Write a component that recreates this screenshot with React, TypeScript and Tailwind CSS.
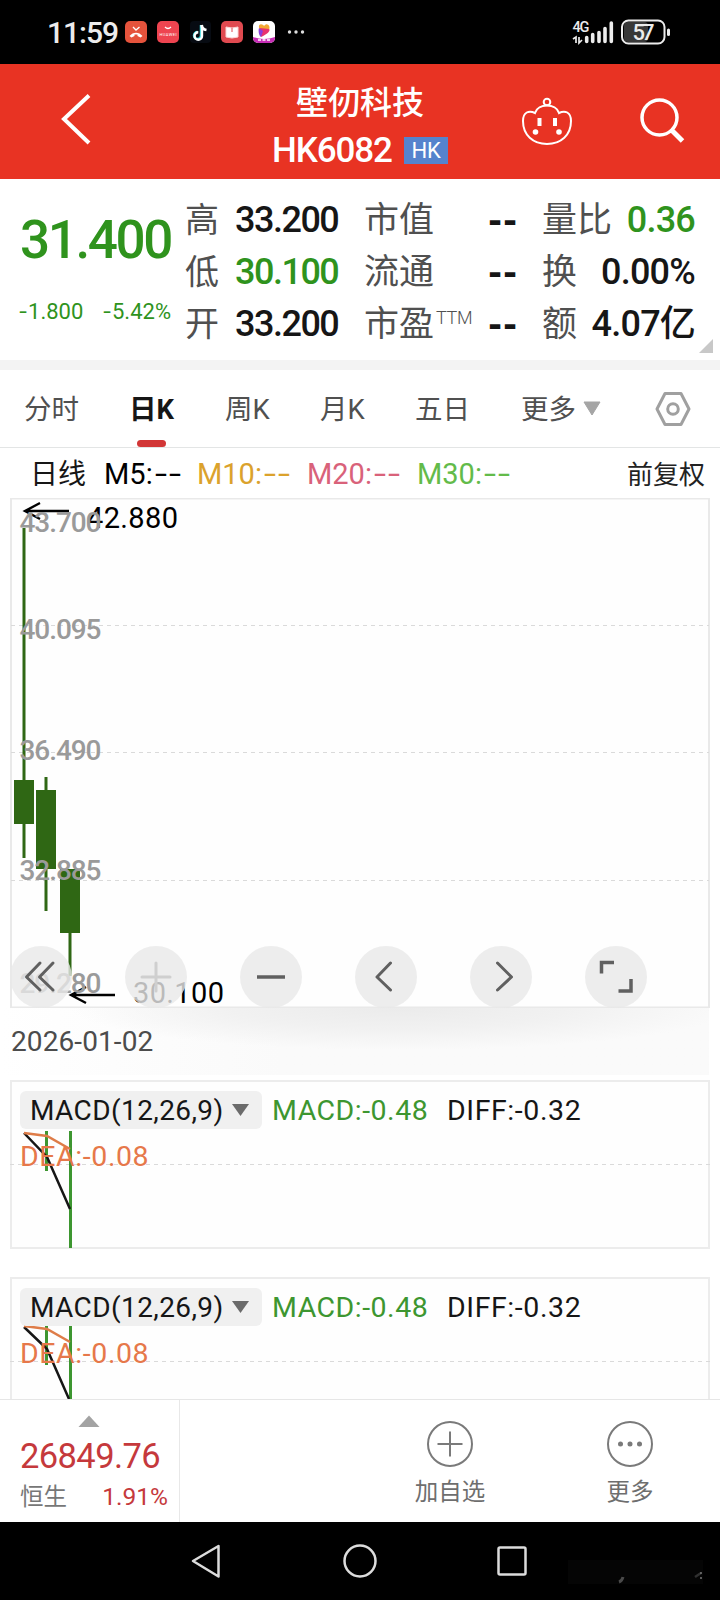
import { Fragment } from "react";
import clsx from "clsx";

interface Candle {
    x: number;
    top: number;
    bottom: number;
    open: number;
    close: number;
}

// Coordinates are relative to the top left corner of the price chart
const CANDLES: Candle[] = [
    { x: 24, top: 30, bottom: 360, open: 282, close: 326 },
    { x: 46, top: 279, bottom: 413, open: 292, close: 371 },
    { x: 70, top: 371, bottom: 478, open: 371, close: 435 },
];

const PRICE_LABELS = [
    { text: "43.700", y: 33.5 },
    { text: "40.095", y: 141 },
    { text: "36.490", y: 262 },
    { text: "32.885", y: 381.5 },
    { text: "29.280", y: 494.5 },
];

const QUOTES = [
    { a: "高", av: "33.200", b: "市值", c: "量比", cv: "0.36", aGreen: false, cGreen: true },
    { a: "低", av: "30.100", b: "流通", c: "换", cv: "0.00%", aGreen: true, cGreen: false },
    { a: "开", av: "33.200", b: "市盈", c: "额", cv: "4.07亿", aGreen: false, cGreen: false },
];

const MA_LEGEND = [
    { text: "M5", className: "w-[93px] text-black" },
    { text: "M10", className: "w-[110px] text-[#dba22c]" },
    { text: "M20", className: "w-[110px] text-[#d9627a]" },
    { text: "M30", className: "w-[110px] text-[#63bb4a]" },
];

const StatusBar = () => (
    <div className="flex h-16 items-center bg-black pl-[47px] text-[#ececec]">
        <span className="w-[78px] pt-[2px] text-[30px] leading-none font-medium tracking-[-1px]">11:59</span>
        <svg width="182" height="24" viewBox="0 0 182 24">
            <rect x="0" y="1" width="22" height="22" rx="5" fill="#e5533c" />
            <path d="M4.500 16c3.500-4.500 9.500-4.500 13 0l-2 1.500-3-1.500v-1.500h-3v1.500l-3 1.500z" fill="#fff" />
            <path d="M8 7l3 3 3.500-3" fill="none" stroke="#fff" strokeWidth="1.300" />
            <rect x="32" y="1" width="22" height="22" rx="5" fill="#ee4450" />
            <path d="M40 7q3 3 6 0" fill="none" stroke="#fff" strokeWidth="1.200" />
            <text x="34.500" y="15.500" fontSize="4" fill="#fff" textLength="17">HUAWEI</text>
            <rect x="65" y="1" width="21" height="22" rx="4" fill="#070b12" />
            <path d="M76 5v10.500a3.500 3.500 0 1 1-3.500-3.500" fill="none" stroke="#35d6dd" strokeWidth="2.500" />
            <path d="M76.500 5c.3 3 2 4.500 5 5" fill="none" stroke="#fff" strokeWidth="2.600" />
            <path d="M77 5v11a3.700 3.700 0 1 1-3.700-3.700" fill="none" stroke="#fff" strokeWidth="2.400" />
            <rect x="96" y="1" width="22" height="22" rx="5" fill="#e04a50" />
            <path d="M101 7l6 1 6-1v10l-6 1-6-1z" fill="#fff" stroke="#fbd5d5" />
            <path d="M107 8v4" stroke="#e04a50" />
            <rect x="128" y="1" width="22" height="22" rx="5" fill="#fff" />
            <path d="M134 8c-1-5 4-4 5-2 3-4 7 0 5 4l-9 1z" fill="#f4a834" />
            <path d="M135 8l9 1c2 2-2 5-8 8z" fill="#e8336f" />
            <path d="M134 8l4 3-2 6c-2-1-3-6-2-9z" fill="#8a3ddc" />
            <path d="M128 17q11 4 22 0v1a5 5 0 0 1-5 5h-12a5 5 0 0 1-5-5z" fill="#c72db6" />
            <path d="M133 20h12" stroke="#fff" strokeDasharray="3 1.500" strokeWidth="1.500" />
            <circle cx="164.500" cy="12" r="1.700" fill="#ddd" />
            <circle cx="171" cy="12" r="1.700" fill="#ddd" />
            <circle cx="177.500" cy="12" r="1.700" fill="#ddd" />
        </svg>
        <svg className="ml-auto mr-[46px]" width="102" height="28" viewBox="572 18 102 28">
            <text x="572.500" y="32" fontSize="14.500" fontWeight="500" fill="#ececec" textLength="17">4G</text>
            <path d="M573 39l3-2v6M579 37v6l3-3" fill="none" stroke="#ececec" strokeWidth="1.700" />
            <path d="M586.700 37.500v4M592.700 34.500v7M599 32.500v9M605 28.500v13M611.300 23v18.500" stroke="#ececec" strokeWidth="3.600" strokeLinecap="round" />
            <rect x="624" y="22" width="24" height="20" rx="4" fill="#383838" />
            <rect x="622" y="20.500" width="42.500" height="23" rx="6.500" fill="none" stroke="#ececec" strokeWidth="2" />
            <path d="M668.500 30v4.500" stroke="#ececec" strokeWidth="3" strokeLinecap="round" />
            <text x="632.500" y="40" fontSize="22" fontWeight="500" fill="#ececec" textLength="22">57</text>
        </svg>
    </div>
);

const Header = () => (
    <header className="flex h-[115px] items-center bg-[#e83323] text-white">
        <svg className="mb-[5px] ml-[60px]" width="32" height="54" viewBox="60 92 32 54">
            <path d="M89 95.500L64 119L89 143" fill="none" stroke="#fff" strokeWidth="4" />
        </svg>
        <div className="ml-[166px] flex w-[204px] flex-col items-center pt-[16px]">
            <h1 className="text-[32px] leading-10 font-medium">壁仞科技</h1>
            <div className="mt-[6px] flex w-[176px] items-center justify-between pb-1">
                <span className="text-[35px] leading-[44px] font-medium tracking-[-1.1px]">HK6082</span>
                <span className="flex h-[27px] w-11 items-center justify-center bg-[#5583cd] text-[22px] leading-none tracking-[-0.3px]">HK</span>
            </div>
        </div>
        <svg className="ml-[58px]" width="54" height="52" viewBox="520 96 54 52" fill="none" stroke="#fff" strokeWidth="2">
            <circle cx="547" cy="102" r="3.300" />
            <path d="M535 113C538 103 556 103 559 113C565 110 571 112 571 121C571 135 561 144 547 144S523 135 523 121C523 112 529 110 535 113Z" />
            <path d="M539.500 118v8M555 118v8" strokeWidth="4" />
            <circle cx="535.500" cy="132" r="2.800" fill="#fff" stroke="none" />
            <circle cx="559" cy="132" r="2.800" fill="#fff" stroke="none" />
        </svg>
        <svg className="mb-[3px] ml-[63px]" width="50" height="50" viewBox="637 95 50 50" fill="none" stroke="#fff">
            <circle cx="659.500" cy="117.500" r="17.500" strokeWidth="3.500" />
            <path d="M671.500 130l11 11" strokeWidth="5" />
        </svg>
    </header>
);

const QuotePanel = () => (
    <section className="relative flex h-[181px] bg-white">
        <div className="w-[185px] pl-5 text-[#2f931d]">
            <div className="mt-[30px] text-[53px] leading-[62px] font-medium tracking-[-2.4px]">31.400</div>
            <div className="mt-[28px] flex justify-between pr-[14px] text-[22px] leading-[26px]">
                <span className="flex"><span className="scale-x-125">-</span><span className="ml-0.5">1.800</span></span>
                <span className="flex"><span className="scale-x-125">-</span><span className="ml-0.5">5.42%</span></span>
            </div>
        </div>
        <div className="grid h-[156px] w-[510px] grid-cols-[46px_133px_118px_60px_auto] grid-rows-[52px_52px_52px] items-center pt-[15px] text-[36px] leading-[52px]">
            {QUOTES.map((q, i) => (
                <Fragment key={i}>
                    <span className="text-[34px] text-[#505050]">{q.a}</span>
                    <span className={clsx("pl-1 font-medium tracking-[-1.5px]", q.aGreen ? "text-[#2f931d]" : "text-[#161616]")}>{q.av}</span>
                    <span className="flex pt-0.5 text-[35px] text-[#505050]">
                        {q.b}
                        {i === 2 && <span className="mt-[-7px] ml-0.5 text-[18px] leading-[52px] font-light tracking-[-0.3px]">TTM</span>}
                    </span>
                    <span className="pl-1.5 font-['DejaVu_Sans'] text-[34px] font-bold tracking-[0.8px] text-[#161616]">--</span>
                    <span className="flex items-center justify-between">
                        <span className="pt-0.5 text-[35px] text-[#505050]">{q.c}</span>
                        <span className={clsx("font-medium tracking-[-0.8px]", q.cGreen ? "text-[#2f931d]" : "text-[#161616]")}>{q.cv}</span>
                    </span>
                </Fragment>
            ))}
        </div>
        <svg className="absolute right-[7px] bottom-[7px]" width="14" height="14">
            <path d="M14 0v14H0z" fill="#c8c8c8" />
        </svg>
    </section>
);

const PeriodTabs = () => (
    <nav className="flex h-[78px] items-center border-b border-[#e3e5e5] pl-[24px] text-[27.500px] leading-none text-[#505050]">
        <span className="w-[105px] pt-[3px]">分时</span>
        <span className="relative w-[96px] pt-[3px] font-bold text-[#161616]">
            日K
            <span className="absolute top-[47px] left-[8px] h-[7px] w-[29px] rounded-full bg-[#d23636]" />
        </span>
        <span className="w-[95px] pt-[3px]">周K</span>
        <span className="w-[95px] pt-[3px]">月K</span>
        <span className="w-[106px] pt-[3px]">五日</span>
        <span className="pt-[3px]">更多</span>
        <svg className="ml-[7px]" width="18" height="15">
            <path d="M1 1h16L9 14z" fill="#a5a5a5" stroke="#a5a5a5" strokeLinejoin="round" />
        </svg>
        <svg className="ml-[52px]" width="40" height="38" viewBox="0 0 40 38" fill="none" stroke="#a0a0a0" strokeWidth="3">
            <path d="M12 3.500h16l8 15.500-8 15.500H12L4 19z" strokeLinejoin="round" />
            <circle cx="20" cy="19" r="5.300" />
        </svg>
    </nav>
);

const PriceChart = () => (
    <svg className="block" width="720" height="510" viewBox="0 0 720 510">
        <rect x="11" y="0.500" width="698" height="509" fill="#fefefe" stroke="#e9e9e9" strokeWidth="2" />
        {[127.500, 254.500, 382.500].map((y) => (
            <path key={y} d={`M11 ${y}H709`} stroke="#dadada" strokeDasharray="4 4" />
        ))}
        {CANDLES.map((c) => (
            <g key={c.x} fill="#2f6714">
                <rect x={c.x - 1.500} y={c.top} width="3" height={c.bottom - c.top} />
                <rect x={c.x - 10} y={c.open} width="20" height={c.close - c.open} />
            </g>
        ))}
        <g fill="none" stroke="#000" strokeWidth="2.400">
            <path d="M69 13H25M40 5L25 13L40 21" />
            <path d="M115 497H71M86 489L71 497L86 505" />
        </g>
        <text x="87" y="29.500" fontSize="29" textLength="91">42.880</text>
        <text x="133" y="504.500" fontSize="29" textLength="91">30.100</text>
        <g fill="#9a9a9a" fontSize="28" fontWeight="500">
            {PRICE_LABELS.map((l) => (
                <text key={l.text} x="19.500" y={l.y} textLength="82">{l.text}</text>
            ))}
        </g>
        <g fill="#e9e9e9" fillOpacity="0.8">
            {[41, 156, 271, 386, 501, 616].map((x) => (
                <circle key={x} cx={x} cy="479" r="31" />
            ))}
        </g>
        <g fill="none" stroke="#606060" strokeWidth="3" strokeLinecap="round" strokeLinejoin="round">
            <path d="M40 465L26.500 479L40 492M53 465L39.500 479L53 492" />
            <path d="M142 479h28M156 465v28" stroke="#cfcfcf" />
            <path d="M257 479h28" strokeLinecap="butt" strokeWidth="3.500" />
            <path d="M390.500 465L377 479L390.500 492M497.500 465L511.500 479L497.500 492" />
            <path d="M614 464.500h-12.500v11M618.500 493h12.500v-12" strokeWidth="3.500" strokeLinejoin="miter" strokeLinecap="butt" />
        </g>
    </svg>
);

interface MacdPanelProps {
    diff: string;
    dea: string;
    bars: string;
    clipped?: boolean;
}

const MacdPanel = ({ diff, dea, bars, clipped }: MacdPanelProps) => (
    <section className={clsx("relative ml-2.5 w-[700px] border-2 border-[#ececec] bg-[#fefefe]", clipped ? "h-[122px] border-b-0" : "h-[169px]")}>
        <svg className="absolute -top-0.5 -left-0.5" width="700" height={clipped ? 122 : 169} fill="none">
            <path d="M0 84.500H700" stroke="#dadada" strokeDasharray="4 4" />
            <path d={bars} stroke="#3d9630" strokeWidth="3" />
            <path d={diff} stroke="#161616" strokeWidth="2.500" />
            <path d={dea} stroke="#de7c48" strokeWidth="2.500" />
        </svg>
        <div className="relative flex items-center pt-2 pl-2 text-[28.500px] leading-[38px]">
            <span className="flex h-[38px] w-[242px] items-center rounded-md bg-[#f0f0f0] pl-[10px] text-[#161616]">
                <span className="w-[201px] pt-0.5 text-[28px] tracking-[0.4px]">MACD(12,26,9)</span>
                <svg width="19" height="14">
                    <path d="M1 1h17L9.500 13z" fill="#6b6b6b" />
                </svg>
            </span>
            <span className="ml-[10px] w-[175px] pt-0.5 tracking-[0.5px] text-[#3d9630]">MACD:-0.48</span>
            <span className="pt-0.5 tracking-[0.6px] text-[#161616]">DIFF:-0.32</span>
        </div>
        <div className="relative mt-[8px] pl-[8px] text-[28.500px] leading-[38px] tracking-[0.6px] text-[#e6784a]">DEA:-0.08</div>
    </section>
);

const BottomBar = () => (
    <footer className="flex h-[123px] border-t border-[#e6e6e6] bg-white text-[#6e6e6e]">
        <div className="w-[180px] border-r border-[#e8e8e8] pl-5 text-[#c5393c]">
            <svg className="mt-[15px] ml-[58px]" width="22" height="13">
                <path d="M11 0.500L21.500 12H0.500z" fill="#a3a3a3" />
            </svg>
            <div className="mt-[8px] text-[34.500px] leading-10 tracking-[-0.6px]">26849.76</div>
            <div className="mt-[6px] flex items-center justify-between pr-[11px] text-[24.500px] leading-[30px]">
                <span className="text-[23.500px] text-[#777]">恒生</span>
                <span>1.91%</span>
            </div>
        </div>
        <div className="ml-[180px] flex w-[180px] flex-col items-center pt-[21px] text-[23.500px]">
            <svg width="46" height="46" fill="none" stroke="#7a7a7a" strokeWidth="2">
                <circle cx="23" cy="23" r="22" />
                <path d="M10.500 23h25M23 10.500v25" />
            </svg>
            <span className="mt-[9px] leading-[32px]">加自选</span>
        </div>
        <div className="flex w-[180px] flex-col items-center pt-[21px] text-[23.500px]">
            <svg width="46" height="46" fill="none" stroke="#7a7a7a" strokeWidth="2">
                <circle cx="23" cy="23" r="22" />
                <path d="M13.500 23h.01M23 23h.01M32.500 23h.01" strokeWidth="5" strokeLinecap="round" />
            </svg>
            <span className="mt-[9px] leading-[32px]">更多</span>
        </div>
    </footer>
);

const SystemNav = () => (
    <div className="h-[78px] bg-black">
        <svg width="720" height="78" fill="none" stroke="#dcdcdc" strokeWidth="2.500" strokeLinejoin="round">
            <path d="M193 39L218.500 24V54.500z" />
            <circle cx="360" cy="39" r="15.500" />
            <rect x="498.500" y="25.500" width="27" height="27" rx="1.500" />
            <rect x="568" y="38" width="135" height="24" fill="#050505" stroke="none" />
            <path d="M619 60q3-1 4-5" stroke="#4a4a4a" strokeWidth="3" />
            <path d="M695 55l6-4" stroke="#303030" />
            <path d="M701 50v10" stroke="#777" strokeWidth="1.500" strokeDasharray="2 3" />
        </svg>
    </div>
);

export default function App() {
    return (
        <div className="flex h-[1600px] w-[720px] flex-col overflow-hidden bg-white font-['Roboto','Noto_Sans_CJK_SC',sans-serif]">
            <StatusBar />
            <Header />
            <QuotePanel />
            <div className="h-2.5 bg-[#f3f3f3]" />
            <PeriodTabs />
            <div className="flex h-[50px] items-center pt-[3px] pl-[30px] text-[29px] leading-none">
                <span className="w-[74px] text-[28px] text-[#161616]">日线</span>
                {MA_LEGEND.map((m) => (
                    <span key={m.text} className={clsx("flex", m.className)}>
                        {m.text}:
                        <span className="ml-1 flex gap-1.5">
                            <span className="scale-x-150">-</span>
                            <span className="scale-x-150">-</span>
                        </span>
                    </span>
                ))}
                <span className="ml-[100px] text-[26px] text-[#222]">前复权</span>
            </div>
            <PriceChart />
            <div className="mr-[11px] h-[67px] bg-linear-to-r from-white to-[#fafafa] to-40%">
                <div className="ml-[11px] h-[67px] bg-[radial-gradient(ellipse_330px_42px_at_390px_0px,#ebebeb,#f1f1f1_50%,transparent)] pt-[17px] text-[28px] leading-[34px] tracking-[0.1px] text-[#4c4c4c]">
                    2026-01-02
                </div>
            </div>
            <div className="h-[5px]" />
            <MacdPanel
                bars="M36.500 51V91M60.500 51V168"
                diff="M14 53L37 77L60 129"
                dea="M14 53L37 56L60 69"
            />
            <div className="h-7" />
            <MacdPanel
                clipped
                bars="M36.500 48V88M60.500 48V122"
                diff="M14 50L37 72L59 122"
                dea="M14 49L37 52L60 65"
            />
            <BottomBar />
            <SystemNav />
        </div>
    );
}
